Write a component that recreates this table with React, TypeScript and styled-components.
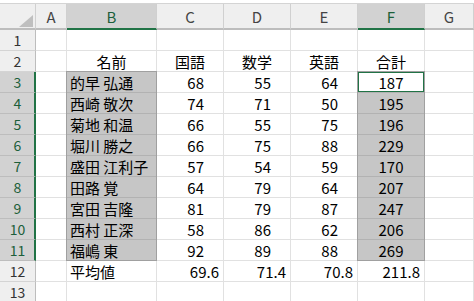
import React from 'react';
import styled, { createGlobalStyle, css } from 'styled-components';

const GlobalStyle = createGlobalStyle`
  body {
    margin: 0;
    background: #ffffff;
    font-family: "Noto Sans CJK JP", "Noto Sans", sans-serif;
  }
`;

const GREEN = '#217346';

const TopEdge = styled.div`
  height: 3px;
  background: #ffffff;
  border-bottom: 1px solid #d4d4d4;
`;

const Sheet = styled.div`
  display: grid;
  grid-template-columns: 36px 31px 90px 67px 67px 67px 67px 1fr;
  grid-template-rows: 26px repeat(13, 21px);
  overflow: hidden;
`;

type Place = { $r: number; $c: number };

const placed = css<Place>`
  grid-row: ${(p) => p.$r};
  grid-column: ${(p) => p.$c};
`;

const ColHead = styled.div<Place & { $sel?: boolean }>`
  ${placed};
  box-sizing: border-box;
  display: flex;
  align-items: center;
  justify-content: center;
  background: ${(p) => (p.$sel ? '#d2d2d2' : '#efefef')};
  color: ${(p) => (p.$sel ? '#1c5f3a' : '#444444')};
  border-right: 1px solid #d0d0d0;
  border-bottom: 2px solid ${(p) => (p.$sel ? GREEN : '#bdbdbd')};
  font-size: 15px;
  padding-top: 1px;
`;

const Corner = styled(ColHead)`
  align-items: flex-end;
  justify-content: flex-end;
  padding: 0 2px 1px 0;
`;

const RowHead = styled.div<Place & { $sel?: boolean }>`
  ${placed};
  box-sizing: border-box;
  display: flex;
  align-items: center;
  justify-content: center;
  background: ${(p) => (p.$sel ? '#d2d2d2' : '#efefef')};
  color: ${(p) => (p.$sel ? '#1c5f3a' : '#333333')};
  border-bottom: 1px solid ${(p) => (p.$sel ? '#bdbdbd' : '#d4d4d4')};
  border-right: ${(p) => (p.$sel ? `2px solid ${GREEN}` : '1px solid #bdbdbd')};
  padding-left: ${(p) => (p.$sel ? '1px' : '0')};
  font-size: 14px;
`;

const Cell = styled.div<Place & { $align?: 'left' | 'center' | 'right'; $pad?: number; $sel?: boolean; $active?: boolean }>`
  ${placed};
  box-sizing: border-box;
  display: flex;
  align-items: center;
  justify-content: ${(p) => (p.$align === 'right' ? 'flex-end' : p.$align === 'center' ? 'center' : 'flex-start')};
  padding: 1px ${(p) => (p.$align === 'right' ? p.$pad ?? 4 : 0)}px 0 ${(p) => (p.$align === 'left' || !p.$align ? 3 : 0)}px;
  background: ${(p) => (p.$sel && !p.$active ? '#c6c6c6' : '#ffffff')};
  border-right: 1px solid ${(p) => (p.$sel ? '#b2b2b2' : '#e1e1e1')};
  border-bottom: 1px solid ${(p) => (p.$sel ? '#b2b2b2' : '#e1e1e1')};
  box-shadow: ${(p) => (p.$active ? `inset 0 0 0 1px ${GREEN}` : 'none')};
  color: #000000;
  font-size: 15px;
  white-space: nowrap;
`;

const SelectionFrame = styled.div<{ $col: number }>`
  grid-row: 4 / 13;
  grid-column: ${(p) => p.$col};
  margin: -1px 0 0 -1px;
  border: 1px solid #a0a0a0;
  pointer-events: none;
  z-index: 2;
`;

const scores: [string, number, number, number, number][] = [
  ['的早 弘通', 68, 55, 64, 187],
  ['西崎 敬次', 74, 71, 50, 195],
  ['菊地 和温', 66, 55, 75, 196],
  ['堀川 勝之', 66, 75, 88, 229],
  ['盛田 江利子', 57, 54, 59, 170],
  ['田路 覚', 64, 79, 64, 207],
  ['宮田 吉隆', 81, 79, 87, 247],
  ['西村 正深', 58, 86, 62, 206],
  ['福嶋 東', 92, 89, 88, 269],
];

const letters = ['A', 'B', 'C', 'D', 'E', 'F', 'G'];
const selectedCols = ['B', 'F'];

function App() {
  const cells: React.ReactNode[] = [];

  letters.forEach((l, i) => {
    cells.push(
      <ColHead key={`h${l}`} $r={1} $c={i + 2} $sel={selectedCols.includes(l)}>
        {l}
      </ColHead>,
    );
  });

  for (let row = 1; row <= 13; row += 1) {
    const r = row + 1;
    const sel = row >= 3 && row <= 11;
    cells.push(
      <RowHead key={`r${row}`} $r={r} $c={1} $sel={sel}>
        {row}
      </RowHead>,
    );

    // column A is always empty
    cells.push(<Cell key={`a${row}`} $r={r} $c={2} />);

    if (row === 2) {
      ['名前', '国語', '数学', '英語', '合計'].forEach((t, i) => {
        cells.push(
          <Cell key={`t${i}`} $r={r} $c={i + 3} $align="center">
            {t}
          </Cell>,
        );
      });
    } else if (sel) {
      const [name, a, b, c, total] = scores[row - 3];
      cells.push(
        <Cell key={`n${row}`} $r={r} $c={3} $sel>
          {name}
        </Cell>,
      );
      [a, b, c].forEach((v, i) => {
        cells.push(
          <Cell key={`v${row}-${i}`} $r={r} $c={i + 4} $align="right" $pad={19}>
            {v}
          </Cell>,
        );
      });
      cells.push(
        <Cell key={`s${row}`} $r={r} $c={7} $align="center" $sel $active={row === 3}>
          {total}
        </Cell>,
      );
    } else if (row === 12) {
      cells.push(
        <Cell key="avg" $r={r} $c={3}>
          平均値
        </Cell>,
      );
      ['69.6', '71.4', '70.8', '211.8'].forEach((v, i) => {
        cells.push(
          <Cell key={`m${i}`} $r={r} $c={i + 4} $align="right" $pad={4}>
            {v}
          </Cell>,
        );
      });
    } else {
      for (let c = 3; c <= 7; c += 1) cells.push(<Cell key={`e${row}-${c}`} $r={r} $c={c} />);
    }
    cells.push(<Cell key={`g${row}`} $r={r} $c={8} />);
  }

  return (
    <>
      <GlobalStyle />
      <TopEdge />
      <Sheet>
        <Corner $r={1} $c={1}>
          <svg width="14" height="12" viewBox="0 0 14 12">
            <polygon points="14,0 14,12 0,12" fill="#bfbfbf" />
          </svg>
        </Corner>
        {cells}
        <SelectionFrame $col={3} />
        <SelectionFrame $col={7} />
      </Sheet>
    </>
  );
}

export default App;
